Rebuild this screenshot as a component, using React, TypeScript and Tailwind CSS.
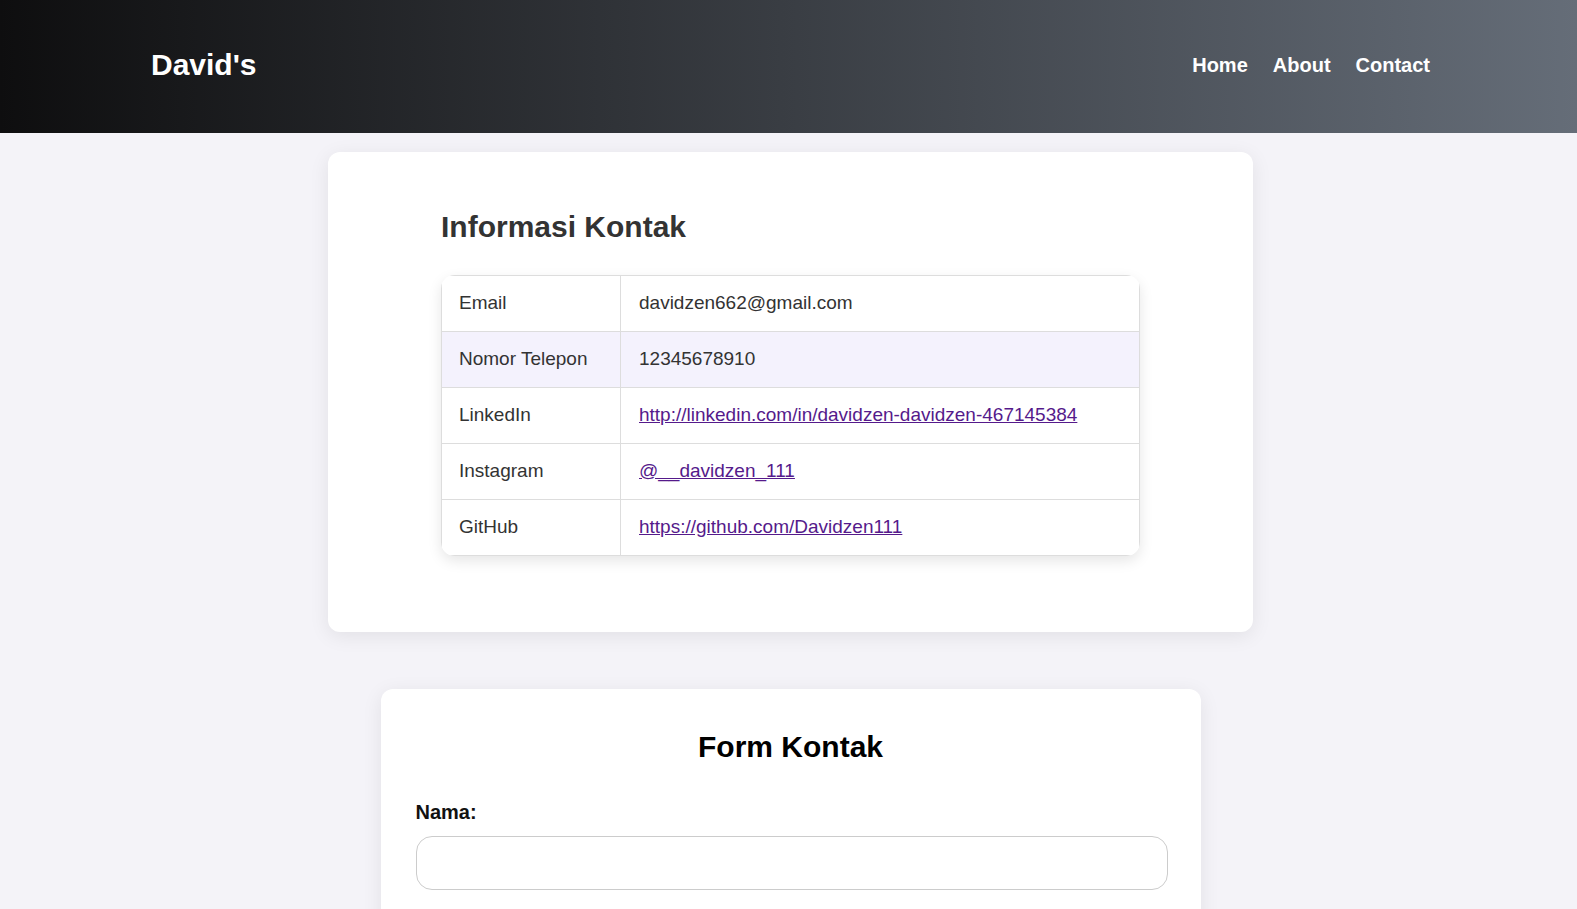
import React from "react";

const rows: { label: string; value: string; href?: string; shade?: boolean }[] = [
  { label: "Email", value: "davidzen662@gmail.com" },
  { label: "Nomor Telepon", value: "12345678910", shade: true },
  {
    label: "LinkedIn",
    value: "http://linkedin.com/in/davidzen-davidzen-467145384",
    href: "http://linkedin.com/in/davidzen-davidzen-467145384",
  },
  { label: "Instagram", value: "@__davidzen_111", href: "https://instagram.com/__davidzen_111" },
  { label: "GitHub", value: "https://github.com/Davidzen111", href: "https://github.com/Davidzen111" },
];

export default function App() {
  return (
    <div className="min-h-screen bg-[#f4f3f8] font-['Liberation_Sans',Arial,sans-serif] text-[#333]">
      <header className="h-[133px] flex items-center justify-between pl-[151px] pr-[147px] pb-[3px] bg-[linear-gradient(to_right,#0e0e0f,#656d78)]">
        <div className="text-[30px] leading-[34px] font-bold text-white">David's</div>
        <nav className="flex gap-[25px] text-[20px] leading-[23px] font-bold text-white">
          <a href="#">Home</a>
          <a href="#">About</a>
          <a href="#">Contact</a>
        </nav>
      </header>

      <main className="pl-[4px] pt-[19px] pb-[60px]">
        <section className="w-[925px] mx-auto bg-white rounded-[12px] shadow-[0_4px_20px_rgba(0,0,0,0.08)] pt-[58px] pb-[76px]">
          <div className="w-[699px] mx-auto">
            <h2 className="text-[30px] leading-[34px] font-bold text-[#333]">Informasi Kontak</h2>
            <div className="mt-[31px] rounded-[14px] overflow-hidden shadow-[0_5px_14px_rgba(0,0,0,0.1)] bg-white">
              <table className="w-full table-fixed border-collapse text-[19px]">
                <colgroup>
                  <col className="w-[179px]" />
                  <col />
                </colgroup>
                <tbody>
                  {rows.map((r) => (
                    <tr key={r.label} className={r.shade ? "bg-[#f4f2fd]" : "bg-white"}>
                      <td className="h-[56px] border border-[#dddddd] px-[17px] align-middle text-[#333]">
                        {r.label}
                      </td>
                      <td className="h-[56px] border border-[#dddddd] px-[18px] align-middle text-[#333]">
                        {r.href ? (
                          <a href={r.href} className="text-[#551a8b] underline">
                            {r.value}
                          </a>
                        ) : (
                          r.value
                        )}
                      </td>
                    </tr>
                  ))}
                </tbody>
              </table>
            </div>
          </div>
        </section>

        <section className="w-[820px] mx-auto mt-[57px] bg-white rounded-[12px] shadow-[0_4px_20px_rgba(0,0,0,0.08)] px-[33px] pt-[41px] pb-[34px]">
          <h2 className="text-center text-[30px] leading-[34px] font-bold text-black">Form Kontak</h2>
          <form className="mt-[37px] pl-[2px] flex flex-col">
            <label className="text-[20px] leading-[23px] font-bold text-[#111]">Nama:</label>
            <input
              type="text"
              className="mt-[12px] w-full h-[54px] rounded-[16px] border border-[#cccccc] bg-white px-4 text-[18px] outline-none"
            />
            <label className="mt-[20px] text-[20px] leading-[23px] font-bold text-[#111]">Email:</label>
            <input
              type="email"
              className="mt-[12px] w-full h-[54px] rounded-[16px] border border-[#cccccc] bg-white px-4 text-[18px] outline-none"
            />
            <label className="mt-[20px] text-[20px] leading-[23px] font-bold text-[#111]">Pesan:</label>
            <textarea className="mt-[12px] w-full h-[120px] rounded-[16px] border border-[#cccccc] bg-white px-4 py-3 text-[18px] outline-none" />
            <button
              type="submit"
              className="mt-[24px] h-[50px] rounded-[16px] bg-[#333] text-white text-[20px] font-bold"
            >
              Kirim
            </button>
          </form>
        </section>
      </main>
    </div>
  );
}
